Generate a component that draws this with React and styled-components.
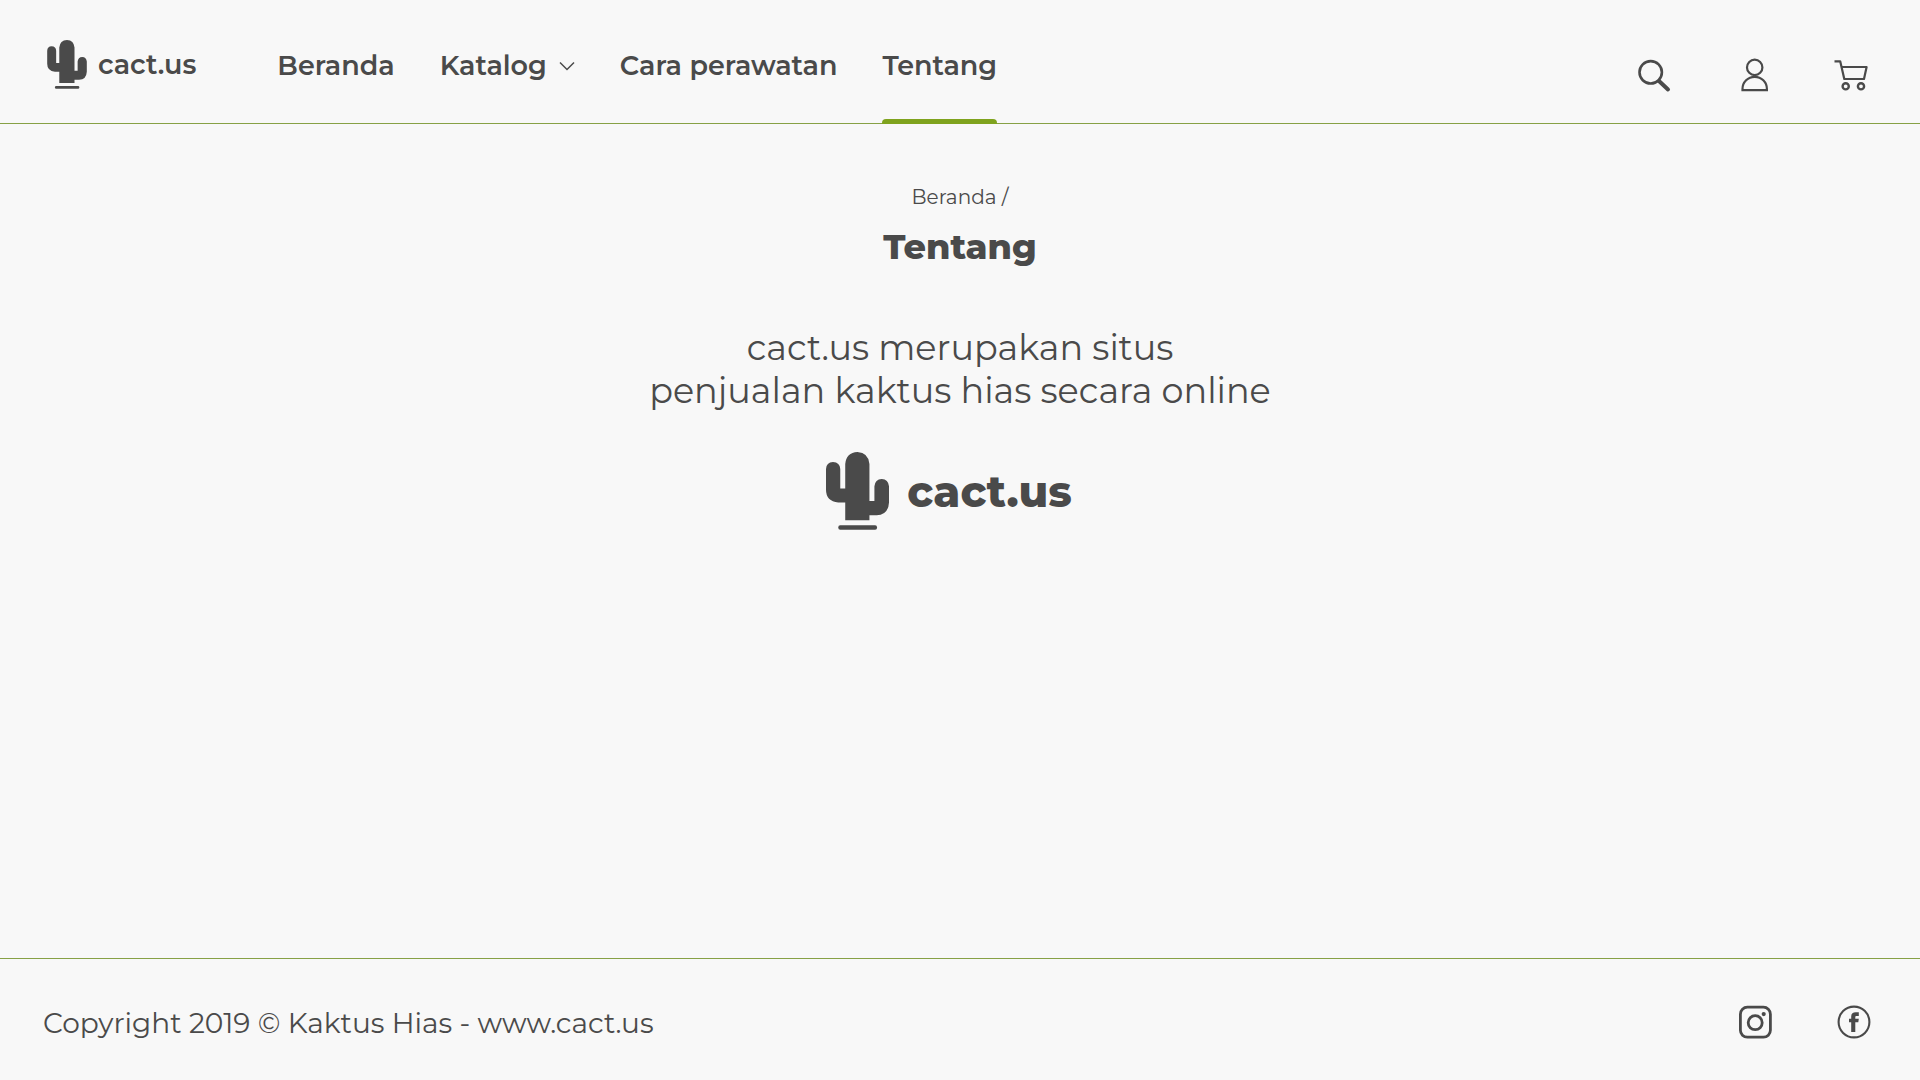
import React from "react";
import styled, { createGlobalStyle, css } from "styled-components";

const ink = "#4a4a4a";
const line = "#87a145";
const leaf = "#7fa31e";

const GlobalStyle = createGlobalStyle`
  *, *::before, *::after { box-sizing: border-box; }
  body {
    margin: 0;
    background: #f8f8f8;
    color: ${ink};
    font-family: Montserrat, Inter, "Open Sans", sans-serif;
  }
  a { color: inherit; text-decoration: none; }
`;

const Page = styled.div`
  min-height: 100vh;
  display: flex;
  flex-direction: column;
`;

const Header = styled.header`
  display: flex;
  justify-content: space-between;
  padding: 0 52px 0 47px;
  border-bottom: 1px solid ${line};
`;

const Start = styled.div`
  display: flex;
  gap: 81px;
`;

const Brand = styled.a`
  display: flex;
  align-items: center;
  gap: ${(p) => (p.$large ? 18 : 11)}px;
  font-size: ${(p) => (p.$large ? 43 : 27)}px;
  line-height: 48px;
  font-weight: ${(p) => (p.$large ? 800 : 600)};
  ${(p) =>
    !p.$large &&
    css`
      padding: 39px 0 34px;
    `}
`;

const BrandName = styled.span`
  padding-top: 2px;
`;

const Cactus = styled.svg`
  flex: none;
  width: ${(p) => (p.$large ? 63 : 40)}px;
  height: ${(p) => (p.$large ? 78 : 49)}px;
  fill: currentColor;
`;

const Nav = styled.nav`
  display: flex;
  gap: 45px;
`;

const NavLink = styled.a`
  display: flex;
  align-items: center;
  gap: 12px;
  padding: 46px 0 33px;
  font-size: 27px;
  line-height: 40px;
  font-weight: 600;
  border-bottom: 4px solid transparent;
  position: relative;
  ${(p) =>
    p.$active &&
    css`
      &::after {
        content: "";
        position: absolute;
        left: 0;
        right: 0;
        bottom: -5px;
        height: 5px;
        border-radius: 4px 4px 0 0;
        background: ${leaf};
      }
    `}
`;

const Chevron = styled.svg`
  width: 16px;
  height: 10px;
  fill: none;
  stroke: currentColor;
  stroke-width: 1.5;
`;

const IconGroup = styled.div`
  display: flex;
  gap: 64px;
  padding-top: ${(p) => p.$top || 0}px;
`;

const IconButton = styled.button`
  width: 34px;
  height: 34px;
  padding: 0;
  border: 0;
  background: none;
  color: inherit;
  cursor: pointer;
`;

const IconLink = styled.a`
  display: block;
  width: 34px;
  height: 34px;
`;

const Icon = styled.svg`
  display: block;
  width: 34px;
  height: 34px;
  fill: none;
  stroke: currentColor;
  overflow: visible;
`;

const Main = styled.main`
  flex: 1;
  display: flex;
  flex-direction: column;
  align-items: center;
  padding: 59px 24px;
  text-align: center;
`;

const Breadcrumb = styled.nav`
  font-size: 20px;
  line-height: 28px;
`;

const Title = styled.h1`
  margin: 14px 0 57px;
  font-size: 35px;
  line-height: 44px;
  font-weight: 800;
`;

const Lead = styled.p`
  margin: 0 0 40px;
  font-size: 35px;
  line-height: 43px;
`;

const Emblem = styled.div`
  padding-right: 22px;
`;

const Footer = styled.footer`
  display: flex;
  align-items: center;
  justify-content: space-between;
  padding: 44px 48px 37px 43px;
  border-top: 1px solid ${line};
`;

const Copyright = styled.p`
  margin: 0;
  font-size: 28px;
  line-height: 40px;
`;

function Logo({ large }) {
  return (
    <Brand href="#" $large={large}>
      <Cactus $large={large} viewBox="77 67 190 235" aria-hidden="true">
        <path d="M135 273V219H114Q77 216 77 181V118Q78 98 98 97Q119 98 120 118V177H135V103Q138 69 172 67Q205 69 208 103V215H223V170Q225 149 245 148Q265 149 267 170V219Q265 256 230 258H208V273Z" />
        <rect x="114" y="288" width="117" height="13" rx="6" />
      </Cactus>
      <BrandName>cact.us</BrandName>
    </Brand>
  );
}

export default function App() {
  return (
    <Page>
      <GlobalStyle />
      <Header>
        <Start>
          <Logo />
          <Nav aria-label="Utama">
            <NavLink href="#">Beranda</NavLink>
            <NavLink href="#">
              Katalog
              <Chevron viewBox="0 0 16 10" aria-hidden="true">
                <path d="M1 1.5 8 8.5 15 1.5" />
              </Chevron>
            </NavLink>
            <NavLink href="#">Cara perawatan</NavLink>
            <NavLink href="#" $active aria-current="page">
              Tentang
            </NavLink>
          </Nav>
        </Start>
        <IconGroup $top={59}>
          <IconButton type="button" aria-label="Cari">
            <Icon viewBox="0 0 34 34">
              <circle cx="12.7" cy="13.3" r="11.2" strokeWidth="2.6" />
              <path d="M21 22 30 30.5" strokeWidth="4" strokeLinecap="round" />
            </Icon>
          </IconButton>
          <IconButton type="button" aria-label="Akun">
            <Icon viewBox="0 0 34 34" strokeWidth="2.2">
              <circle cx="18.7" cy="8.4" r="7.7" />
              <path d="M6.5 31.2V30C6.5 23 12 17.8 18.7 17.8S30.9 23 30.9 30V31.2Z" />
            </Icon>
          </IconButton>
          <IconButton type="button" aria-label="Keranjang">
            <Icon viewBox="0 0 34 34" strokeWidth="2.2">
              <path d="M.5 2.3H6.2L10.3 20H30L32.6 8H7.6" strokeLinejoin="round" />
              <circle cx="11.7" cy="27.3" r="3.1" strokeWidth="2.4" />
              <circle cx="27" cy="27.3" r="3.1" strokeWidth="2.4" />
            </Icon>
          </IconButton>
        </IconGroup>
      </Header>

      <Main>
        <Breadcrumb aria-label="Remah roti">
          <a href="#">Beranda</a> /
        </Breadcrumb>
        <Title>Tentang</Title>
        <Lead>
          cact.us merupakan situs
          <br />
          penjualan kaktus hias secara online
        </Lead>
        <Emblem>
          <Logo large />
        </Emblem>
      </Main>

      <Footer>
        <Copyright>Copyright 2019 © Kaktus Hias - www.cact.us</Copyright>
        <IconGroup>
          <IconLink href="#" aria-label="Instagram">
            <Icon viewBox="0 0 34 34">
              <rect x="0.4" y="1.2" width="30" height="30" rx="7" strokeWidth="2.8" />
              <circle cx="15.2" cy="16.7" r="7" strokeWidth="2.8" />
              <circle cx="23.7" cy="8.1" r="2.1" fill="currentColor" stroke="none" />
            </Icon>
          </IconLink>
          <IconLink href="#" aria-label="Facebook">
            <Icon viewBox="0 0 34 34">
              <circle cx="16" cy="16" r="15.4" strokeWidth="2.1" />
              <path
                d="M13.2 26V16.3H11V12.7H13.2V10.5C13.2 7.5 15 6.2 17.8 6.2H20.8V9.9H18.8C17.6 9.9 17.3 10.4 17.3 11.3V12.7H20.8L20.3 16.3H17.3V26Z"
                fill="currentColor"
                stroke="none"
              />
            </Icon>
          </IconLink>
        </IconGroup>
      </Footer>
    </Page>
  );
}
